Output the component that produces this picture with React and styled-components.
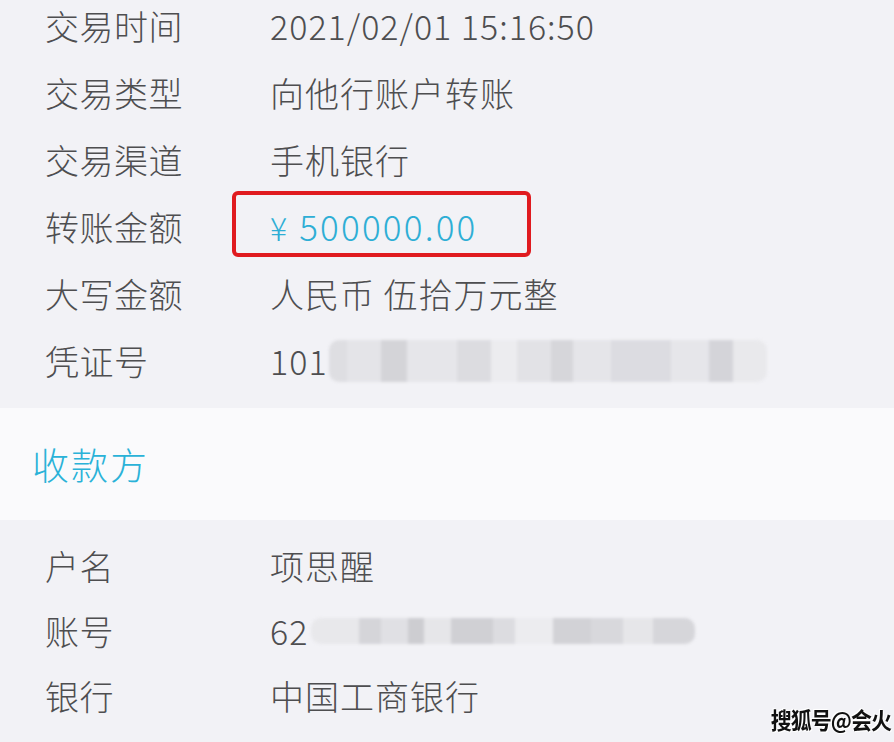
import styled, { createGlobalStyle } from "styled-components";

const GlobalStyle = createGlobalStyle`
  html, body {
    margin: 0;
    padding: 0;
    background: #f2f2f6;
  }
  body {
    font-family: "Noto Sans CJK SC", "Noto Sans", sans-serif;
    overflow: hidden;
  }
`;

const Page = styled.div`
  position: relative;
  width: 894px;
  height: 742px;
  overflow: hidden;
  background: #f2f2f6;
`;

const Section = styled.section`
  padding: ${(p) => p.$pad};
  margin-top: ${(p) => p.$shift || "0"};
`;

const Row = styled.div`
  display: flex;
  align-items: center;
  height: ${(p) => p.$h || 67}px;
  padding-left: 45px;
  font-size: 34px;
  font-weight: 300;
  color: #4e4e50;
`;

const Label = styled.div`
  width: 225px;
  flex-shrink: 0;
  letter-spacing: 0.5px;
`;

const Value = styled.div`
  display: flex;
  align-items: center;
  letter-spacing: 1px;
`;

const Amount = styled.div`
  position: relative;
  line-height: 48px;
  font-size: 35px;
  color: #2eaed5;
  letter-spacing: 2.2px;

  &::before {
    content: "";
    position: absolute;
    left: -38px;
    top: -11px;
    width: 291px;
    height: 58px;
    border: 4px solid #e01b1f;
    border-radius: 6px;
  }
`;

const Yen = styled.span`
  font-weight: 200;
  font-size: 32px;
  margin-right: 12px;
  letter-spacing: 0;
`;

const Blur = styled.div`
  display: flex;
  align-items: stretch;
  height: ${(p) => p.$h}px;
  margin-left: ${(p) => p.$ml || 0}px;
  border-radius: 10px;
  filter: blur(1.6px);
  overflow: hidden;
`;

const Chunk = styled.span`
  display: block;
  width: ${(p) => p.$w}px;
  background: ${(p) => p.$c};
`;

const Band = styled.div`
  display: flex;
  align-items: center;
  height: 112px;
  padding-left: 32px;
  background: #fafafc;
  font-size: 37px;
  font-weight: 300;
  color: #2ab2d8;
  letter-spacing: 2px;
`;

const Watermark = styled.div`
  position: absolute;
  right: 3px;
  bottom: 8px;
  font-size: 21px;
  font-weight: 700;
  color: #111;
  letter-spacing: -1px;
  transform: scaleY(1.1);
  text-shadow: 0 0 2px #fff, 0 0 2px #fff, 1px 1px 0 #fff, -1px -1px 0 #fff;
`;

const voucher = [
  [18, "#dedee2"], [34, "#e4e4e8"], [26, "#d4d4d8"], [50, "#e6e6ea"], [34, "#dcdce0"],
  [26, "#ececef"], [34, "#e2e2e6"], [22, "#d6d6da"], [38, "#e5e5e9"], [60, "#dcdce1"],
  [38, "#e6e6ea"], [24, "#d4d4d9"], [34, "#e9e9ec"],
];

const account = [
  [48, "#e8e8eb"], [22, "#d5d5d9"], [27, "#e0e0e4"], [16, "#cdcdd1"], [27, "#e6e6e9"],
  [42, "#d0d0d4"], [22, "#dcdce0"], [38, "#ececef"], [38, "#d2d2d6"], [32, "#d8d8dc"],
  [30, "#e6e6e9"], [42, "#d6d6da"],
];

function Smudge({ data, h, ml }) {
  return (
    <Blur $h={h} $ml={ml}>
      {data.map(([w, c], i) => (
        <Chunk key={i} $w={w} $c={c} />
      ))}
    </Blur>
  );
}

export default function App() {
  return (
    <Page>
      <GlobalStyle />
      <Section $pad="0 0 14px" $shift="-8px">
        <Row>
          <Label>交易时间</Label>
          <Value>2021/02/01 15:16:50</Value>
        </Row>
        <Row>
          <Label>交易类型</Label>
          <Value>向他行账户转账</Value>
        </Row>
        <Row>
          <Label>交易渠道</Label>
          <Value>手机银行</Value>
        </Row>
        <Row>
          <Label>转账金额</Label>
          <Amount>
            <Yen>¥</Yen>500000.00
          </Amount>
        </Row>
        <Row>
          <Label>大写金额</Label>
          <Value>人民币 伍拾万元整</Value>
        </Row>
        <Row>
          <Label>凭证号</Label>
          <Value>
            101
            <Smudge data={voucher} h={42} ml={1} />
          </Value>
        </Row>
      </Section>
      <Band>收款方</Band>
      <Section $pad="13px 0 0">
        <Row $h={65}>
          <Label>户名</Label>
          <Value>项思醒</Value>
        </Row>
        <Row $h={65}>
          <Label>账号</Label>
          <Value>
            62
            <Smudge data={account} h={26} ml={3} />
          </Value>
        </Row>
        <Row $h={65}>
          <Label>银行</Label>
          <Value>中国工商银行</Value>
        </Row>
      </Section>
      <Watermark>搜狐号@会火</Watermark>
    </Page>
  );
}
